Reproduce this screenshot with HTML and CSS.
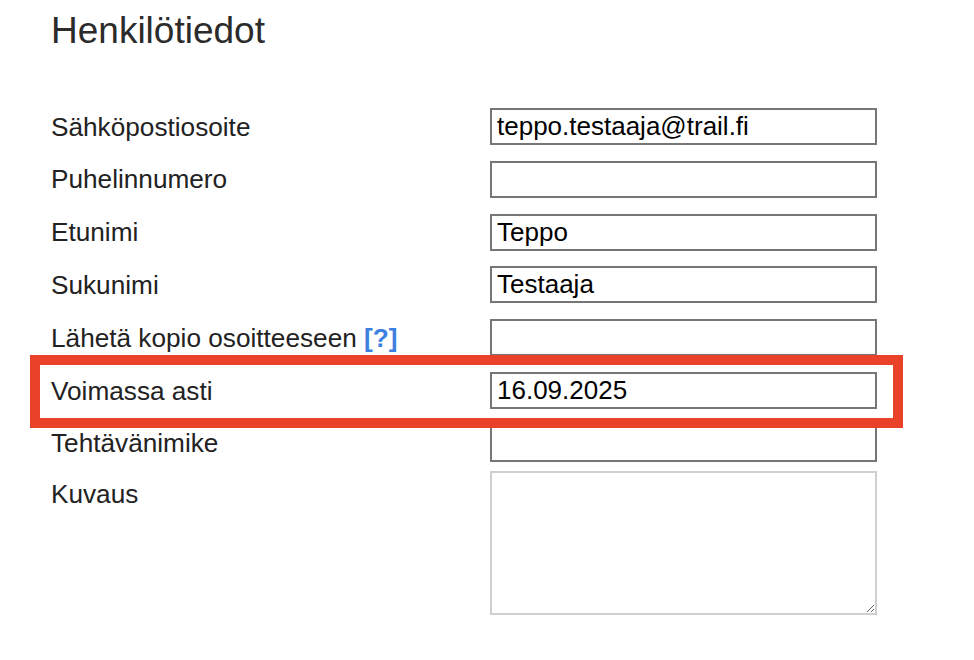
FILE: index.html
```html
<!DOCTYPE html>
<html lang="fi">
<head>
<meta charset="utf-8">
<title>Henkilötiedot</title>
<link rel="stylesheet" href="styles.css">
</head>
<body>
<div class="page">
  <h1 class="title">Henkilötiedot</h1>
  <form class="form">
    <label class="label">Sähköpostiosoite</label>
    <input class="field" type="text" value="teppo.testaaja@trail.fi">
    <label class="label">Puhelinnumero</label>
    <input class="field" type="text" value="">
    <label class="label">Etunimi</label>
    <input class="field" type="text" value="Teppo">
    <label class="label">Sukunimi</label>
    <input class="field" type="text" value="Testaaja">
    <label class="label">Lähetä kopio osoitteeseen <span class="help">[?]</span></label>
    <input class="field" type="text" value="">
    <label class="label">Voimassa asti</label>
    <input class="field" type="text" value="16.09.2025">
    <label class="label">Tehtävänimike</label>
    <input class="field" type="text" value="">
    <label class="label label-top">Kuvaus</label>
    <textarea class="area"></textarea>
  </form>
  <div class="highlight"></div>
</div>
</body>
</html>
```
FILE: styles.css
```css
* { box-sizing: border-box; }
html, body { margin: 0; padding: 0; background: #fff; }
body {
  font-family: "Liberation Sans", Arial, Helvetica, sans-serif;
  width: 974px;
  height: 660px;
  overflow: hidden;
}
.page {
  position: relative;
  padding: 9px 0 0 51px;
}
.title {
  margin: 0;
  font-size: 37px;
  font-weight: normal;
  color: #2b2b2b;
  letter-spacing: 0;
  line-height: 43px;
}
.form {
  margin-top: 56px;
  display: grid;
  grid-template-columns: 439px 387px;
  grid-auto-rows: 37px;
  row-gap: 15.83px;
  align-items: center;
}
.label {
  font-size: 26.2px;
  color: #222;
  line-height: 30px;
}
.label-top {
  align-self: start;
  padding-top: 8px;
  margin-top: -7px;
}
.help {
  color: #3d7fe0;
  font-weight: bold;
}
.field {
  width: 387px;
  height: 37px;
  margin: 0;
  border: 2px solid #767676;
  padding: 0 5px;
  font-family: "Liberation Sans", Arial, Helvetica, sans-serif;
  font-size: 26px;
  color: #000;
  background: #fff;
  border-radius: 0;
  outline: none;
}
.area {
  width: 387px;
  height: 144px;
  margin: -7px 0 0 0;
  border: 2px solid #cfcfcf;
  border-radius: 0;
  align-self: start;
  resize: both;
  font-family: "Liberation Sans", Arial, sans-serif;
  font-size: 26px;
  background: #fff;
}
.highlight {
  position: absolute;
  left: 30px;
  top: 355px;
  width: 873px;
  height: 73px;
  border: 10px solid #ea4129;
  pointer-events: none;
}
```
